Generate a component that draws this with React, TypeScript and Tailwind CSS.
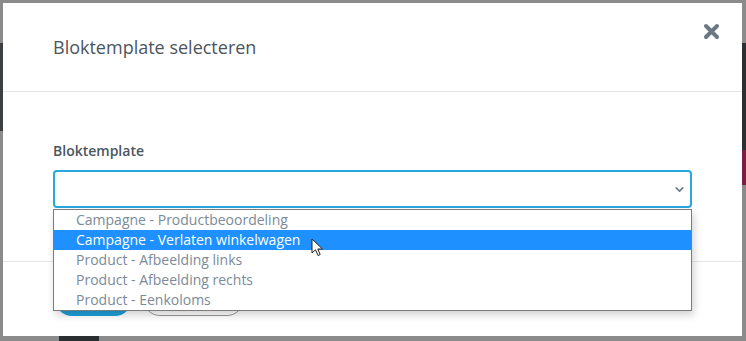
import { ChevronDown } from 'lucide-react';

const options = [
  'Campagne - Productbeoordeling',
  'Campagne - Verlaten winkelwagen',
  'Product - Afbeelding links',
  'Product - Afbeelding rechts',
  'Product - Eenkoloms',
];

export default function App() {
  return (
    <div
      className="relative w-[746px] h-[341px] overflow-hidden bg-[#8b8b8b] pt-[3px] pl-[3px]"
      style={{ fontFamily: '"Open Sans", "Liberation Sans", sans-serif' }}
    >
      {/* page behind the overlay */}
      <div className="absolute left-0 top-[43px] w-[3px] h-[88px] bg-[#3c3f42]" />
      <div className="absolute right-0 top-[43px] w-[4px] h-[107px] bg-[#2d3033]" />
      <div className="absolute right-0 top-[150px] w-[4px] h-[35px] bg-[#7a1f43]" />
      <div className="absolute left-[59px] bottom-0 w-[40px] h-[5px] bg-[#2b2e31]" />

      {/* modal */}
      <div className="relative w-[739px] h-[333px] bg-white flex flex-col">
        <div className="h-[89px] shrink-0 flex items-center justify-between pl-[50px] pr-[22px] border-b border-[#e6e6e6]">
          <h1 className="text-[18px] text-[#4b5560] font-normal">Bloktemplate selecteren</h1>
          <svg width="17" height="17" viewBox="0 0 17 17" className="self-start mt-[20px]">
            <path d="M3 3 L14 14 M14 3 L3 14" stroke="#6b7884" strokeWidth="4" strokeLinecap="round" />
          </svg>
        </div>

        <div className="pt-[49px] pb-[53px] px-[50px] border-b border-[#e6e6e6]">
          <div className="text-[14px] leading-[20px] font-semibold text-[#4b5560] mb-[9px]">Bloktemplate</div>
          <div className="relative">
            <div className="h-[38px] w-[639px] rounded-[4px] border-2 border-[#29a8df] flex items-center justify-end pr-[4px]">
              <ChevronDown size={13} strokeWidth={3} className="text-[#6e7b87]" />
            </div>
            <div className="absolute left-0 top-[39px] w-[639px] z-10 bg-white border border-[#7c7c7c] shadow-[2px_4px_8px_rgba(0,0,0,0.18)]">
              {options.map((o, i) => (
                <div
                  key={o}
                  className={
                    i === 1
                      ? 'h-[20px] leading-[20px] pl-[22px] text-[14px] bg-[#1e90ff] text-white'
                      : 'h-[20px] leading-[20px] pl-[22px] text-[14px] text-[#7c8a98]'
                  }
                >
                  {o}
                </div>
              ))}
            </div>
          </div>
        </div>

        {/* footer buttons, their labels are hidden under the open list */}
        <div className="flex items-center gap-[11px] pt-[20px] pl-[52px]">
          <div className="h-[34px] w-[77px] rounded-full bg-[#1ea0db]" />
          <div className="h-[34px] w-[101px] rounded-full border border-[#9a9a9a]" />
        </div>
      </div>

      {/* mouse cursor */}
      <svg className="absolute left-[311px] top-[238px] z-20" width="14" height="20" viewBox="0 0 14 20">
        <path
          d="M1 1 L1 15 L4.5 11.8 L7 17.5 L9.2 16.5 L6.8 11 L11.5 11 Z"
          fill="white"
          stroke="#222"
          strokeWidth="1"
          strokeLinejoin="round"
        />
      </svg>
    </div>
  );
}
